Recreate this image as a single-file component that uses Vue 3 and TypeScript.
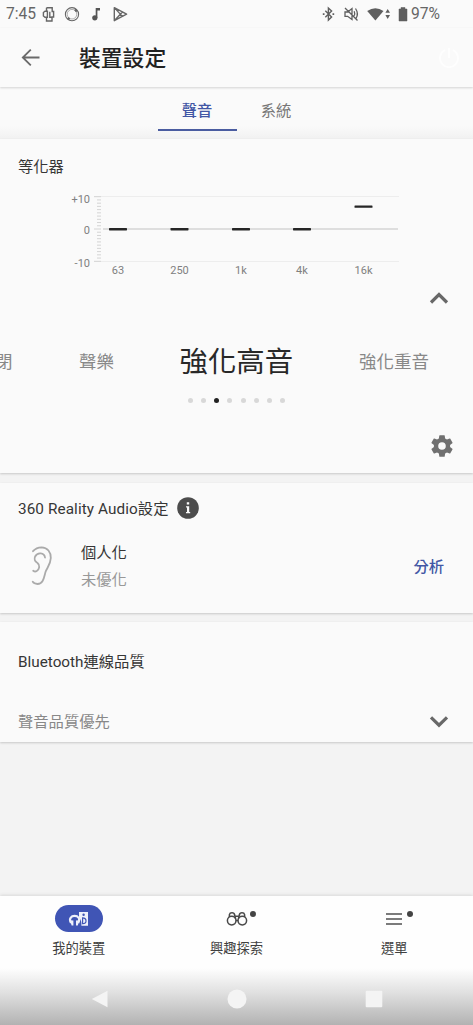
<script setup lang="ts">
import { ref } from 'vue'

interface Band {
  label: string
  x: number
  gain: number
}

const bands: Band[] = [
  { label: '63', x: 118, gain: 0 },
  { label: '250', x: 179.5, gain: 0 },
  { label: '1k', x: 241, gain: 0 },
  { label: '4k', x: 302, gain: 0 },
  { label: '16k', x: 363.5, gain: 7 },
]

const ticks: number[] = Array.from({ length: 21 }, (_, i) => i - 10)
const levelY = (gain: number): number => 49 - gain * 3.23

const tabs: string[] = ['聲音', '系統']
const activeTab = ref(0)
const activePreset = ref(2)
</script>

<template>
  <div class="screen">
    <div class="status">
      <span class="clock">7:45</span>
      <svg class="notices" width="90" height="18" viewBox="0 0 90 18" fill="none" stroke="#666" stroke-width="1.4">
        <path d="M5.5 2.7H11.2V6.5H12.6V12H11V16H5.5V12.3M5.5 2.7V6.3M4 6.2H6.4V12.2H4L2.4 11V7.5ZM11 12.3H8.8V6.8" />
        <circle cx="31" cy="9.2" r="6.6" stroke-width="1.1" />
        <circle cx="31" cy="9.2" r="4.8" stroke-width=".5" />
        <path d="M26.6 13L28.6 14.2M34 4.3L35.8 6.6" stroke-width="2.2" />
        <g fill="#555" stroke="none">
          <circle cx="53.8" cy="12.8" r="2.6" />
          <path d="M54.7 3H59V5.5H56.4V13H54.7Z" />
        </g>
        <path d="M73.3 2.6L85.6 9.2L73.3 15.7ZM73.3 2.6L81.4 11.4M73.3 15.7L81.4 7" stroke-linejoin="round" stroke-width="1.4" />
      </svg>
      <svg class="signals" width="90" height="18" viewBox="0 0 90 18" fill="none" stroke="#5f5f5f" stroke-width="1.4">
        <path d="M4.3 5.8L10.6 12L7.4 15.1V3L10.6 6L4.3 12.3" />
        <path d="M1.8 9.1H3.5M11.5 9.1H13.2" stroke-width="1.8" />
        <path d="M24 7H26.6L31 3.5V14.5L26.6 11.3H24ZM33.2 6.2Q34.4 9 33 11M34.5 3.5Q38 8.5 35 13.5M24 3L36.5 15.5" stroke-width="1.3" />
        <path d="M46.2 6Q54.4 .4 62.5 6L54.4 15.6Z" fill="#5f5f5f" stroke="none" />
        <path d="M64.4 7.8L66.7 4L69 7.8ZM64.4 10.1L66.7 13.9L69 10.1Z" fill="#5f5f5f" stroke="none" />
        <path d="M80 2.5H84V4H86V16H78V4H80Z" fill="#5f5f5f" stroke="#5f5f5f" stroke-width=".5" />
      </svg>
      <span class="charge">97%</span>
    </div>

    <header class="appbar">
      <svg class="back" width="20" height="20" viewBox="0 0 20 20" fill="none" stroke="#6a6a6a" stroke-width="1.8">
        <path d="M18.5 9.5H2M9.8 1.6L1.8 9.5L9.8 17.4" />
      </svg>
      <h1>裝置設定</h1>
      <svg class="power" width="22" height="22" viewBox="0 0 22 22" fill="none" stroke="#fefefe" stroke-width="1.8">
        <path d="M7 3A9 9 0 1 0 15 3M11 1V11" />
      </svg>
    </header>

    <nav class="tabs">
      <button
        v-for="(tab, i) in tabs"
        :key="tab"
        class="tab"
        :class="{ active: activeTab === i }"
        @click="activeTab = i"
      >{{ tab }}</button>
    </nav>

    <section class="card equalizer">
      <h2>等化器</h2>
      <svg class="chart" width="473" height="100" viewBox="0 0 473 100">
        <g stroke="#ededed" stroke-width="1">
          <path d="M94 16.5H399M94 81.5H399" />
        </g>
        <path d="M103 49H398" stroke="#d4d4d4" stroke-width="1.6" />
        <path
          v-for="t in ticks"
          :key="t"
          :d="`M${t % 10 === 0 ? 94 : 97} ${levelY(t)}H101`"
          stroke="#d4d4d4"
          stroke-width="1"
        />
        <g class="axis" text-anchor="end">
          <text x="90" y="22.5">+10</text>
          <text x="90" y="53.8">0</text>
          <text x="90" y="86.5">-10</text>
        </g>
        <g v-for="b in bands" :key="b.label" class="axis" text-anchor="middle">
          <rect :x="b.x - 9" :y="levelY(b.gain) - 1" width="18" height="2.4" rx=".6" fill="#262626" />
          <text :x="b.x" y="94">{{ b.label }}</text>
        </g>
      </svg>
      <svg class="chevron" width="20" height="12" viewBox="0 0 20 12" fill="none" stroke="#686868" stroke-width="3.2">
        <path d="M2 10.5L10 2.6L18 10.5" />
      </svg>
      <div class="presets">
        <span class="preset first">閉</span>
        <span class="preset second">聲樂</span>
        <span class="preset current">強化高音</span>
        <span class="preset last">強化重音</span>
      </div>
      <div class="dots">
        <i v-for="n in 8" :key="n" :class="{ on: n - 1 === activePreset }"></i>
      </div>
      <svg class="gear" width="26" height="26" viewBox="0 0 24 24" fill="#707070">
        <path d="M19.43 12.98c.04-.32.07-.64.07-.98s-.03-.66-.07-.98l2.11-1.65c.19-.15.24-.42.12-.64l-2-3.46c-.12-.22-.39-.3-.61-.22l-2.49 1c-.52-.4-1.08-.73-1.69-.98l-.38-2.65A.49.49 0 0 0 14 2h-4c-.25 0-.46.18-.49.42l-.38 2.65c-.61.25-1.17.59-1.69.98l-2.49-1c-.23-.09-.49 0-.61.22l-2 3.46c-.13.22-.07.49.12.64l2.11 1.65c-.04.32-.07.65-.07.98s.03.66.07.98l-2.11 1.65c-.19.15-.24.42-.12.64l2 3.46c.12.22.39.3.61.22l2.49-1c.52.4 1.08.73 1.69.98l.38 2.65c.03.24.24.42.49.42h4c.25 0 .46-.18.49-.42l.38-2.65c.61-.25 1.17-.59 1.69-.98l2.49 1c.23.09.49 0 .61-.22l2-3.46c.12-.22.07-.49-.12-.64zM12 15.5A3.5 3.5 0 1 1 12 8.5a3.5 3.5 0 0 1 0 7z" />
      </svg>
    </section>

    <section class="card reality">
      <div class="heading">
        <h2>360 Reality Audio設定</h2>
        <svg width="22" height="22" viewBox="0 0 22 22">
          <circle cx="11" cy="11" r="10.8" fill="#4c4c4c" />
          <path d="M9 9.2H12.2V15H13.2V16.3H9V15H10V10.5H9ZM9.8 5.2H12.2V7.6H9.8Z" fill="#fafafa" />
        </svg>
      </div>
      <div class="personal">
        <svg class="ear" width="22" height="40" viewBox="0 0 22 40" fill="none" stroke="#aaa" stroke-width="1.8" stroke-linecap="round">
          <path d="M2 5.2C4.5 2.2 7.5 1.3 10.5 1.3C16.5 1.5 20 6 19.8 12C19.5 19 16 21.5 14.5 26C13 31 12.5 38 6.5 38C4 38 2.5 37.2 1.7 35.7" />
          <path d="M14 11.5C13.3 6.5 6.5 6 4.1 10.5C2.5 14.5 4.5 15.5 6.5 17C9.2 19 8.7 23.5 5.5 25.2C4.4 25.7 3.2 25.5 2.2 24.8" />
        </svg>
        <div class="words">
          <p>個人化</p>
          <p class="muted">未優化</p>
        </div>
        <button class="analyze">分析</button>
      </div>
    </section>

    <section class="card bluetooth">
      <h2>Bluetooth連線品質</h2>
      <div class="quality">
        <span>聲音品質優先</span>
        <svg width="20" height="12" viewBox="0 0 20 12" fill="none" stroke="#686868" stroke-width="3.2">
          <path d="M2 1.3L10 9.2L18 1.3" />
        </svg>
      </div>
    </section>

    <div class="spacer"></div>

    <footer>
      <div class="menu">
        <div class="item">
          <div class="icon pill">
            <svg width="22" height="18" viewBox="0 0 22 18" fill="none">
              <path d="M11 2H20V15.8H13.4Q13.8 10 11 7.6Z" fill="#eef0fa" />
              <circle cx="15.6" cy="4.8" r="1.2" fill="#4055b5" />
              <path d="M14.6 7.8Q18 7.8 18 10.9Q18 13.8 14.6 13.7Z" stroke="#4055b5" stroke-width="1.2" />
              <path d="M3 13C.4 8.5 3.4 5.9 6.6 5.9C9.9 5.9 12.7 8.5 10.2 13" stroke="#eef0fa" stroke-width="2.2" />
              <path d="M2 10.2L5.4 10.6V15.6H3.6ZM11.4 10.2L8 10.6V15.6H9.8Z" fill="#eef0fa" />
            </svg>
          </div>
          <span>我的裝置</span>
        </div>
        <div class="item">
          <div class="icon">
            <svg width="22" height="16" viewBox="0 0 22 16" fill="none" stroke="#484848" stroke-width="1.5">
              <circle cx="5.7" cy="9.6" r="4.3" /><circle cx="16.3" cy="9.6" r="4.3" />
              <path d="M3.4 6V3.6Q3.8 1.8 6 1.8Q8.3 1.8 8.6 3.8L9.6 7.8M18.6 6V3.6Q18.2 1.8 16 1.8Q13.7 1.8 13.4 3.8L12.4 7.8M8.8 5.2H13.2M9.8 9.4H12.2" />
            </svg>
            <b class="badge"></b>
          </div>
          <span>興趣探索</span>
        </div>
        <div class="item">
          <div class="icon">
            <svg width="16" height="12" viewBox="0 0 16 12" stroke="#505050" stroke-width="1.4">
              <path d="M0 1H16M0 6H16M0 11H16" />
            </svg>
            <b class="badge"></b>
          </div>
          <span>選單</span>
        </div>
      </div>
      <div class="system">
        <svg width="18" height="18" viewBox="0 0 18 18"><path d="M.8 9L16.5 .8V17.2Z" /></svg>
        <svg width="20" height="20" viewBox="0 0 20 20"><circle cx="10" cy="10" r="9.5" /></svg>
        <svg width="18" height="18" viewBox="0 0 18 18"><rect x=".7" y=".7" width="16.6" height="16.6" rx="1" /></svg>
      </div>
    </footer>
  </div>
</template>

<style>
body {
  margin: 0;
  background: #f3f3f3;
}
</style>

<style scoped>
.screen {
  width: 473px;
  height: 1025px;
  display: flex;
  flex-direction: column;
  overflow: hidden;
  background: #f3f3f3;
  color: #363636;
  font-family: Roboto, "Noto Sans CJK TC", sans-serif;
  font-size: 15.3px;
  line-height: 22px;
}
h1, h2, p { margin: 0; font-weight: 400; }
h2 { font-size: 15.3px; line-height: 22px; }
svg { display: block; flex: none; }
button {
  border: 0;
  padding: 0;
  background: none;
  font: inherit;
}
.status {
  flex: none;
  height: 28px;
  display: flex;
  align-items: center;
  background: #fafafa;
  color: #666;
  font-size: 15.6px;
}
.clock { width: 32px; margin-left: 6px; }
.notices { margin-left: 3px; }
.signals { margin-left: 190px; }
.charge { margin-left: 0; }
.appbar {
  flex: none;
  height: 59px;
  display: flex;
  align-items: center;
  background: #fafafa;
  box-shadow: 0 1px 2px #d4d4d4;
  position: relative;
}
.back { margin-left: 21px; }
h1 {
  margin-left: 38px;
  padding-top: 2px;
  font-size: 21.8px;
  line-height: 32px;
  font-weight: 500;
  color: #222;
}
.power { margin-left: auto; margin-right: 13px; }
.tabs {
  flex: none;
  height: 52px;
  display: flex;
  justify-content: center;
  align-items: flex-start;
  background: linear-gradient(#fafafa 75%, #f1f1f1);
}
.tab {
  width: 79px;
  height: 44px;
  padding-top: 5px;
  color: #777;
  border-bottom: 2px solid transparent;
}
.tab.active {
  color: #4257a5;
  border-color: #4a5ca0;
  font-weight: 500;
}
.card {
  flex: none;
  background: #fafafa;
  box-shadow: 0 1px 2px #c8c8c8;
}
.equalizer {
  height: 334px;
  display: flex;
  flex-direction: column;
}
.equalizer h2 { margin: 17px 0 0 18px; }
.chart { margin-top: 2px; }
.axis { font-size: 11px; fill: #808080; }
.chevron { margin: 12px 24px 0 auto; }
.presets {
  height: 42px;
  margin-top: 37px;
  display: flex;
  align-items: center;
  overflow: hidden;
  color: #888;
  font-size: 17.5px;
  white-space: nowrap;
}
.first { margin-left: -5px; }
.second { margin-left: 66.5px; }
.current {
  margin-left: 65.5px;
  padding-top: 2px;
  color: #282828;
  font-size: 28.4px;
  line-height: 40px;
}
.last { margin-left: 66px; }
.dots {
  display: flex;
  justify-content: center;
  gap: 8.1px;
  margin-top: 15px;
}
.dots i {
  width: 5px;
  height: 5px;
  border-radius: 50%;
  background: #d8d8d8;
}
.dots .on { background: #222; }
.gear { margin: 30px 18px 0 auto; }
.reality {
  margin-top: 10px;
  height: 130px;
}
.heading {
  display: flex;
  align-items: center;
  gap: 8px;
  padding: 13px 0 0 18px;
}
.heading h2 {
  padding-top: 2px;
  margin-bottom: -1px;
  letter-spacing: .09px;
}
.personal {
  display: flex;
  align-items: center;
  margin: 21px 28px 0 31px;
}
.ear { margin-top: -2px; }
.words { margin-left: 28px; line-height: 27px; }
.muted { color: #989898; }
.analyze {
  margin-left: auto;
  margin-right: 1px;
  color: #4257a5;
  font-weight: 500;
}
.bluetooth {
  margin-top: 9px;
  height: 120px;
}
.bluetooth h2 { padding: 29px 0 0 18px; }
.quality {
  display: flex;
  align-items: center;
  justify-content: space-between;
  margin: 38px 24px 0 18px;
  color: #888;
}
.spacer { flex: 1; }
footer {
  flex: none;
  height: 129px;
  display: flex;
  flex-direction: column;
  background: linear-gradient(#fefefe 56%, #e0e0e0 75%, #b2b2b2);
  box-shadow: 0 -1px 3px #d8d8d8;
}
.menu { display: flex; height: 77px; }
.item {
  flex: 1;
  display: flex;
  flex-direction: column;
  align-items: center;
  padding-top: 9px;
  font-size: 13.3px;
  line-height: 20px;
  color: #404040;
}
.icon {
  position: relative;
  width: 48px;
  height: 27px;
  margin-bottom: 7px;
  display: flex;
  align-items: center;
  justify-content: center;
}
.pill {
  border-radius: 14px;
  background: #4055b5;
}
.badge {
  position: absolute;
  left: 37px;
  top: 6px;
  width: 6px;
  height: 6px;
  border-radius: 50%;
  background: #444;
}
.system {
  display: flex;
  justify-content: center;
  align-items: center;
  gap: 118px;
  height: 53px;
  fill: #f4f4f4;
}
</style>
